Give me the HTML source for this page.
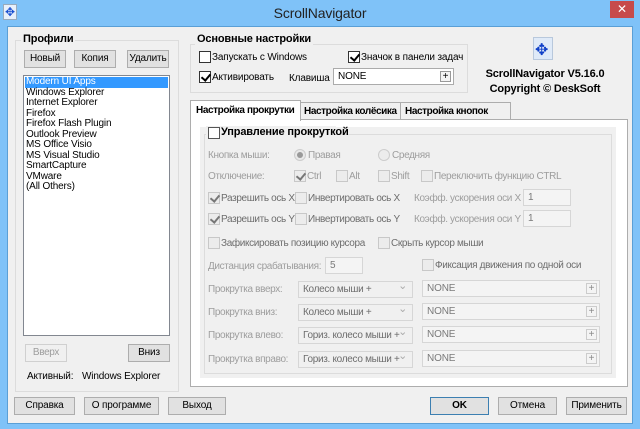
<!DOCTYPE html>
<html><head><meta charset="utf-8"><style>
*{box-sizing:border-box;margin:0;padding:0}
body{width:640px;height:429px;background:#7fc2f8;font-family:"Liberation Sans","DejaVu Sans",sans-serif;font-size:10px;letter-spacing:-0.15px;color:#000;position:relative;overflow:hidden}
.a{position:absolute;white-space:nowrap}
.client{position:absolute;left:7px;top:26px;width:626px;height:398px;background:#f0f0f0;border:1px solid #5a9fd6}
.btn{position:absolute;height:18px;border:1px solid #adadad;background:#e1e1e1;text-align:center;line-height:16px;white-space:nowrap}
.grp{position:absolute;border:1px solid #dcdcdc}
.gl{position:absolute;background:#f0f0f0;font-weight:bold;font-size:11px;padding:0 2px;white-space:nowrap}
.cb{position:absolute;width:12px;height:12px;border:1px solid #333;background:#fff}
.cbd{border-color:#c8c8c8;background:#ececec}
.chk::after{content:"";position:absolute;left:3px;top:0px;width:4px;height:7px;border:solid #000;border-width:0 2px 2px 0;transform:rotate(40deg)}
.cbd.chk::after{border-color:#777}
.g{color:#9d9d9d;letter-spacing:-0.35px}
.fld{position:absolute;height:17px;border:1px solid #ababab;background:#fff;padding-left:4px;line-height:15px;white-space:nowrap}
.fd{background:#f4f4f4;border-color:#d6d6d6;color:#7a7a7a}
.pl{position:absolute;right:2px;top:2px;width:11px;height:11px;border:1px solid #ccc;background:#f4f4f4;font-size:10px;line-height:9px;text-align:center;color:#888}
.cmb{position:absolute;height:17px;border:1px solid #d6d6d6;background:#f0f0f0;padding-left:4px;line-height:15px;color:#6d6d6d;width:115px;white-space:nowrap;overflow:hidden;letter-spacing:-0.3px}
.cmb::after{content:"⌄";position:absolute;right:5px;top:-3px;color:#aaa;font-size:11px}
.tab{font-weight:bold;letter-spacing:-0.4px}
</style></head><body>
<div class="a" style="left:3px;top:4px;width:14px;height:16px;background:#e8f0fb;border:1px solid #9ab"></div>
<div class="a" style="left:5px;top:5px;color:#1a4fd0;font-size:12px">✥</div>
<div class="a" style="left:0;width:640px;top:5px;text-align:center;font-size:14px;color:#222">ScrollNavigator</div>
<div class="a" style="left:610px;top:1px;width:24px;height:17px;background:#c74b4b;color:#fff;text-align:center;font-size:12px;line-height:16px">✕</div>
<div class="client"></div>

<div class="grp" style="left:15px;top:40px;width:164px;height:352px"></div>
<div class="gl" style="left:21px;top:33px">Профили</div>
<div class="btn" style="left:24px;top:50px;width:42px">Новый</div>
<div class="btn" style="left:74px;top:50px;width:42px">Копия</div>
<div class="btn" style="left:127px;top:50px;width:42px">Удалить</div>
<div class="a" style="left:23px;top:75px;width:147px;height:261px;background:#fff;border:1px solid #828790"></div>
<div class="a" style="left:25px;top:77px;width:143px;height:11px;background:#3399ff"></div>
<div class="a" style="left:26px;top:77px;line-height:10.5px;color:#000">
<span style="color:#fff">Modern UI Apps</span><br>Windows Explorer<br>Internet Explorer<br>Firefox<br>Firefox Flash Plugin<br>Outlook Preview<br>MS Office Visio<br>MS Visual Studio<br>SmartCapture<br>VMware<br>(All Others)</div>
<div class="btn g" style="left:25px;top:344px;width:42px;border-color:#d0d0d0;background:#f0f0f0">Вверх</div>
<div class="btn" style="left:128px;top:344px;width:42px">Вниз</div>
<div class="a" style="left:27px;top:371px">Активный:</div>
<div class="a" style="left:82px;top:371px">Windows Explorer</div>

<div class="grp" style="left:190px;top:44px;width:278px;height:49px"></div>
<div class="gl" style="left:195px;top:33px">Основные настройки</div>
<div class="cb" style="left:199px;top:51px"></div><div class="a" style="left:212px;top:52px">Запускать с Windows</div>
<div class="cb chk" style="left:348px;top:51px"></div><div class="a" style="left:361px;top:52px">Значок в панели задач</div>
<div class="cb chk" style="left:199px;top:71px"></div><div class="a" style="left:212px;top:72px">Активировать</div>
<div class="a" style="left:289px;top:73px">Клавиша</div>
<div class="fld" style="left:333px;top:68px;width:121px">NONE<div class="pl" style="color:#000;border-color:#999">+</div></div>

<div class="a" style="left:533px;top:37px;width:20px;height:23px;background:#dfeaf8;border:1px solid #b8c8dc"></div>
<div class="a" style="left:535px;top:40px;color:#1040c8;font-size:16px">✥</div>
<div class="a" style="left:480px;width:130px;top:67px;text-align:center;font-weight:bold;font-size:11px;line-height:15px">ScrollNavigator V5.16.0<br>Copyright © DeskSoft</div>

<div class="a" style="left:190px;top:119px;width:438px;height:268px;background:#fff;border:1px solid #adadad"></div>
<div class="a tab" style="left:190px;top:100px;width:111px;height:21px;background:#fff;border:1px solid #adadad;border-bottom:none;padding:4px 0 0 5px">Настройка прокрутки</div>
<div class="a tab" style="left:300px;top:102px;width:101px;height:18px;background:#f0f0f0;border:1px solid #adadad;padding:3px 0 0 3px">Настройка колёсика</div>
<div class="a tab" style="left:400px;top:102px;width:111px;height:18px;background:#f0f0f0;border:1px solid #adadad;padding:3px 0 0 4px">Настройка кнопок</div>

<div class="a" style="left:200px;top:127px;width:416px;height:251px;background:#f0f0f0"></div>
<div class="grp" style="left:204px;top:134px;width:408px;height:240px;border-color:#dcdcdc"></div>
<div class="a" style="left:206px;top:126px;width:130px;height:14px;background:#f0f0f0"></div>
<div class="cb" style="left:208px;top:127px;border-color:#555"></div>
<div class="a" style="left:221px;top:126px;font-weight:bold;font-size:11px">Управление прокруткой</div>

<div class="a g" style="left:208px;top:150px">Кнопка мыши:</div>
<div class="a" style="left:294px;top:149px;width:12px;height:12px;border-radius:50%;border:1px solid #ccc;background:#e8e8e8"><div style="position:absolute;left:2px;top:2px;width:6px;height:6px;border-radius:50%;background:#999"></div></div>
<div class="a g" style="left:308px;top:150px">Правая</div>
<div class="a" style="left:378px;top:149px;width:12px;height:12px;border-radius:50%;border:1px solid #ccc;background:#ececec"></div>
<div class="a g" style="left:392px;top:150px">Средняя</div>

<div class="a g" style="left:208px;top:171px">Отключение:</div>
<div class="cb cbd chk" style="left:294px;top:170px"></div><div class="a g" style="left:307px;top:171px">Ctrl</div>
<div class="cb cbd" style="left:336px;top:170px"></div><div class="a g" style="left:349px;top:171px">Alt</div>
<div class="cb cbd" style="left:378px;top:170px"></div><div class="a g" style="left:391px;top:171px">Shift</div>
<div class="cb cbd" style="left:421px;top:170px"></div><div class="a g" style="left:434px;top:171px">Переключить функцию CTRL</div>

<div class="cb cbd chk" style="left:208px;top:192px"></div><div class="a g" style="left:221px;top:193px;color:#6d6d6d">Разрешить ось X</div>
<div class="cb cbd" style="left:295px;top:192px"></div><div class="a g" style="left:308px;top:193px;color:#6d6d6d">Инвертировать ось X</div>
<div class="a g" style="left:414px;top:193px">Коэфф. ускорения оси X</div>
<div class="fld fd" style="left:523px;top:189px;width:48px">1</div>

<div class="cb cbd chk" style="left:208px;top:213px"></div><div class="a g" style="left:221px;top:214px;color:#6d6d6d">Разрешить ось Y</div>
<div class="cb cbd" style="left:295px;top:213px"></div><div class="a g" style="left:308px;top:214px;color:#6d6d6d">Инвертировать ось Y</div>
<div class="a g" style="left:414px;top:214px">Коэфф. ускорения оси Y</div>
<div class="fld fd" style="left:523px;top:210px;width:48px">1</div>

<div class="cb cbd" style="left:208px;top:237px"></div><div class="a g" style="left:221px;top:238px;color:#6d6d6d">Зафиксировать позицию курсора</div>
<div class="cb cbd" style="left:378px;top:237px"></div><div class="a g" style="left:391px;top:238px;color:#6d6d6d">Скрыть курсор мыши</div>

<div class="a g" style="left:208px;top:261px">Дистанция срабатывания:</div>
<div class="fld fd" style="left:325px;top:257px;width:38px">5</div>
<div class="cb cbd" style="left:422px;top:259px"></div><div class="a g" style="left:435px;top:260px;color:#6d6d6d">Фиксация движения по одной оси</div>

<div class="a g" style="left:208px;top:284px">Прокрутка вверх:</div>
<div class="cmb" style="left:298px;top:281px">Колесо мыши +</div>
<div class="fld fd" style="left:422px;top:280px;width:178px">NONE<div class="pl">+</div></div>
<div class="a g" style="left:208px;top:307px">Прокрутка вниз:</div>
<div class="cmb" style="left:298px;top:304px">Колесо мыши +</div>
<div class="fld fd" style="left:422px;top:303px;width:178px">NONE<div class="pl">+</div></div>
<div class="a g" style="left:208px;top:330px">Прокрутка влево:</div>
<div class="cmb" style="left:298px;top:327px">Гориз. колесо мыши +</div>
<div class="fld fd" style="left:422px;top:326px;width:178px">NONE<div class="pl">+</div></div>
<div class="a g" style="left:208px;top:354px">Прокрутка вправо:</div>
<div class="cmb" style="left:298px;top:351px">Гориз. колесо мыши +</div>
<div class="fld fd" style="left:422px;top:350px;width:178px">NONE<div class="pl">+</div></div>

<div class="btn" style="left:14px;top:397px;width:61px">Справка</div>
<div class="btn" style="left:84px;top:397px;width:75px">О программе</div>
<div class="btn" style="left:168px;top:397px;width:58px">Выход</div>
<div class="btn" style="left:430px;top:397px;width:59px;border:1px solid #3c7fb1;font-weight:bold">OK</div>
<div class="btn" style="left:498px;top:397px;width:59px">Отмена</div>
<div class="btn" style="left:566px;top:397px;width:61px">Применить</div>
</body></html>
